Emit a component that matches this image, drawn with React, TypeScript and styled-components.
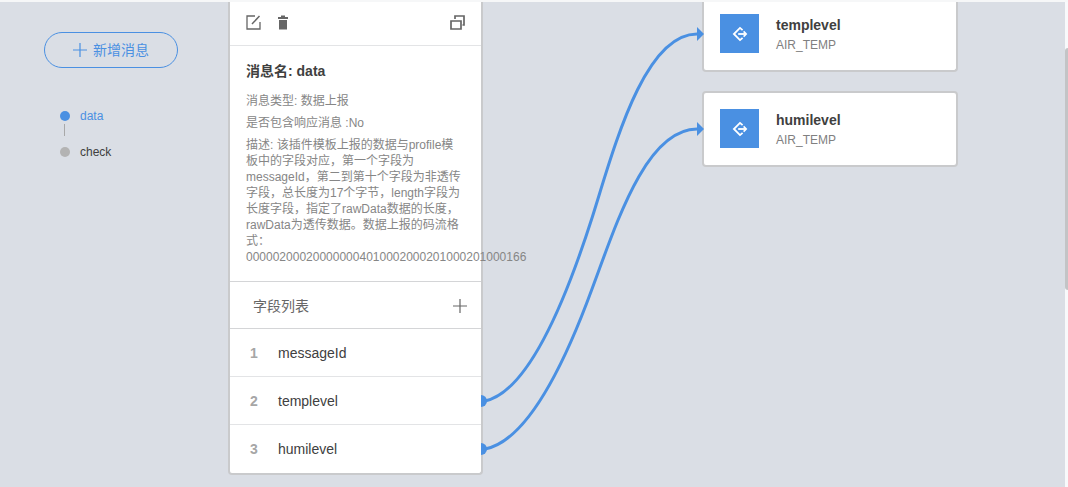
import React from 'react';
import styled, { createGlobalStyle } from 'styled-components';

const blue = '#4a90e2';

const GlobalStyle = createGlobalStyle`
  * { box-sizing: border-box; }
  body {
    margin: 0;
    background: #dadee5;
    font-family: "Liberation Sans", "Noto Sans CJK SC", sans-serif;
    font-size: 12px;
    line-height: 16px;
    color: #404040;
  }
  button { font: inherit; padding: 0; background: none; border: 0; cursor: pointer; }
  h2, h3, p, ul, ol { margin: 0; padding: 0; list-style: none; }
  svg { display: block; }
`;

const Page = styled.div`
  min-height: 100vh;
  display: flex;
  flex-direction: column;
  border-top: 2px solid #f6f7f8;
`;

const Workspace = styled.div`
  flex: 1;
  display: flex;
`;

const Sidebar = styled.nav`
  flex: none;
  width: 228px;
  padding: 30px 50px 0 44px;
`;

const AddButton = styled.button`
  display: flex;
  align-items: center;
  justify-content: center;
  gap: 6px;
  width: 100%;
  height: 36px;
  border: 1px solid ${blue};
  border-radius: 18px;
  color: ${blue};
  font-size: 14px;
`;

const MessageList = styled.ul`
  display: flex;
  flex-direction: column;
  padding: 40px 0 0 16px;
`;

const MessageItem = styled.li`
  & + &::before {
    content: '';
    display: block;
    width: 1px;
    height: 12px;
    margin: 0 0 8px 4px;
    background: #a8a8a8;
  }
`;

const MessageLink = styled.a<{ $active?: boolean }>`
  display: flex;
  align-items: center;
  gap: 10px;
  color: ${p => (p.$active ? blue : '#404040')};
  text-decoration: none;
  &::before {
    content: '';
    width: 10px;
    height: 10px;
    border-radius: 50%;
    background: ${p => (p.$active ? blue : '#b3b3b3')};
  }
`;

const Canvas = styled.main`
  flex: 1;
  display: flex;
  align-items: flex-start;
  min-width: 0;
`;

const Card = styled.section<{ $cut?: boolean }>`
  background: #fff;
  border: 2px solid #c9cacc;
  border-radius: 4px;
  ${p => p.$cut && 'border-top: 0; border-top-left-radius: 0; border-top-right-radius: 0;'}
`;

const MessageCard = styled(Card)`
  flex: none;
  width: 255px;
`;

const Toolbar = styled.div`
  display: flex;
  align-items: center;
  gap: 16px;
  height: 44px;
  padding: 0 16px 3px;
  border-bottom: 1px solid #e3e4e6;
`;

const IconButton = styled.button<{ $end?: boolean }>`
  color: #666;
  margin-left: ${p => (p.$end ? 'auto' : '0')};
`;

const Details = styled.div`
  display: flex;
  flex-direction: column;
  gap: 6px;
  padding: 15px 16px 16px;
  color: #868686;
`;

const Title = styled.h2`
  margin-bottom: 6px;
  color: #404040;
  font-size: 14px;
  line-height: 20px;
  font-weight: 700;
`;

const FieldsHeader = styled.div`
  display: flex;
  align-items: center;
  justify-content: space-between;
  height: 48px;
  padding: 2px 14px 0 23px;
  border: solid #d4d5d7;
  border-width: 1px 0;
`;

const FieldsTitle = styled.h3`
  color: #666;
  font-size: 14px;
  font-weight: 400;
`;

const FieldRow = styled.li`
  display: flex;
  align-items: center;
  height: 48px;
  padding: 0 20px;
  font-size: 14px;
  border-bottom: 1px solid #e3e4e6;
  &:last-child { border-bottom-color: transparent; }
`;

const FieldIndex = styled.span`
  width: 28px;
  color: #a6a6a6;
  font-weight: 700;
`;

const Wires = styled.svg`
  flex: none;
  position: relative;
  overflow: visible;
  pointer-events: none;
`;

const Targets = styled.div`
  flex: none;
  width: 256px;
  margin-right: 8px;
  display: flex;
  flex-direction: column;
  gap: 19px;
`;

const TargetCard = styled(Card)`
  display: flex;
  gap: 17px;
  padding: ${p => (p.$cut ? '12px 16px 17px' : '16px 16px 17px')};
`;

const TargetIcon = styled.span`
  display: grid;
  place-items: center;
  width: 39px;
  height: 39px;
  background: ${blue};
`;

const TargetName = styled.h3`
  margin: 1px 0 2px;
  font-size: 14px;
  line-height: 20px;
`;

const TargetType = styled.p`
  color: #808080;
`;

const ScrollTrack = styled.div`
  flex: none;
  width: 3px;
  padding-top: 46px;
  background: #f8f9fb;
`;

const ScrollThumb = styled.div`
  height: 242px;
  border-radius: 3px 0 0 3px;
  background: #c3c4c6;
`;

const Plus = () => (
  <svg width="14" height="14" viewBox="0 0 14 14" stroke="currentColor" strokeWidth="1.2" aria-hidden="true">
    <path d="M7 0V14M0 7H14" />
  </svg>
);

const EditIcon = () => (
  <svg width="15" height="15" viewBox="0 0 15 15" fill="none" stroke="currentColor" aria-hidden="true">
    <path d="M9 1H1V14H14V7" strokeWidth="1.3" />
    <path d="M6 9L13.5 1" strokeWidth="1.5" />
  </svg>
);

const TrashIcon = () => (
  <svg width="12" height="15" viewBox="0 0 12 15" fill="currentColor" aria-hidden="true">
    <path d="M1 2H4V0.6H8V2H11V4H1ZM2 5H10V14.4H2Z" />
  </svg>
);

const CopyIcon = () => (
  <svg width="15" height="15" viewBox="0 0 15 15" fill="none" stroke="currentColor" strokeWidth="1.7" aria-hidden="true">
    <path d="M1 6H11V14H1ZM5 4V1H14V10H12.5" />
  </svg>
);

const RouteIcon = () => (
  <svg width="16" height="16" viewBox="0 0 16 16" fill="none" stroke="#fff" strokeWidth="1.8" aria-hidden="true">
    <path d="M10.6 4.2L8 1.9L1.9 8L8 14.1L10.6 11.8" />
    <path d="M6.2 8H14" />
    <path d="M11.6 5.4L14.2 8L11.6 10.6" strokeWidth="1.6" />
  </svg>
);

const fields = ['messageId', 'templevel', 'humilevel'];
const targets = ['templevel', 'humilevel'];
const wires = [
  { from: 399, to: 32, path: 'M2 399Q54 388 109 216C130 150 160 32 214 32' },
  { from: 447, to: 127, path: 'M2 447Q54 437 109 287C132 226 162 127 214 127' },
];

export default function App() {
  return (
    <Page>
      <GlobalStyle />
      <Workspace>
        <Sidebar>
          <AddButton><Plus />新增消息</AddButton>
          <MessageList>
            <MessageItem><MessageLink href="#data" $active>data</MessageLink></MessageItem>
            <MessageItem><MessageLink href="#check">check</MessageLink></MessageItem>
          </MessageList>
        </Sidebar>
        <Canvas>
          <MessageCard $cut>
            <Toolbar>
              <IconButton aria-label="编辑"><EditIcon /></IconButton>
              <IconButton aria-label="删除"><TrashIcon /></IconButton>
              <IconButton aria-label="复制" $end><CopyIcon /></IconButton>
            </Toolbar>
            <Details>
              <Title>消息名: data</Title>
              <p>消息类型: 数据上报</p>
              <p>是否包含响应消息 :No</p>
              <p>
                描述: 该插件模板上报的数据与profile模板中的字段对应，第一个字段为messageId，第二到第十个字段为非透传字段，总长度为17个字节，length字段为长度字段，指定了rawData数据的长度，rawData为透传数据。数据上报的码流格式：000002000200000004010002000201000201000166
              </p>
            </Details>
            <FieldsHeader>
              <FieldsTitle>字段列表</FieldsTitle>
              <IconButton aria-label="添加字段"><Plus /></IconButton>
            </FieldsHeader>
            <ol>
              {fields.map((name, i) => (
                <FieldRow key={name}><FieldIndex>{i + 1}</FieldIndex>{name}</FieldRow>
              ))}
            </ol>
          </MessageCard>
          <Wires width="219" height="473" viewBox="0 0 219 473" aria-hidden="true">
            {wires.map(w => (
              <g key={w.from} fill={blue}>
                <path d={w.path} fill="none" stroke={blue} strokeWidth="3" />
                <path d={`M-2 ${w.from - 6}A6 6 0 0 1 -2 ${w.from + 6}Z`} />
                <path d={`M214 ${w.to - 7}L221 ${w.to}L214 ${w.to + 7}Z`} />
              </g>
            ))}
          </Wires>
          <Targets>
            {targets.map((name, i) => (
              <TargetCard key={name} $cut={i === 0}>
                <TargetIcon><RouteIcon /></TargetIcon>
                <div>
                  <TargetName>{name}</TargetName>
                  <TargetType>AIR_TEMP</TargetType>
                </div>
              </TargetCard>
            ))}
          </Targets>
        </Canvas>
        <ScrollTrack><ScrollThumb /></ScrollTrack>
      </Workspace>
    </Page>
  );
}
